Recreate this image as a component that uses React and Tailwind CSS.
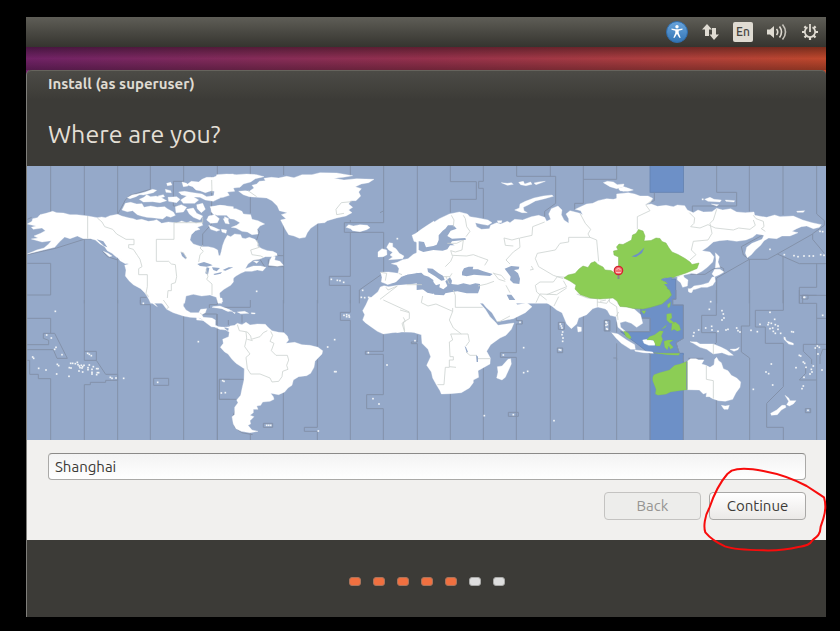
import React from "react";

const SEA = "#95a9c9";
const ZONE = "#6d90c7";
const GREEN = "#8ccd55";

/* Each tile of the map is drawn on a grid three times finer than the map. */
const TILES = {
  northAmerica: "translate(20 160) scale(.33333)",
  atlantic: "translate(220 160) scale(.33333)",
  eurasia: "translate(420 160) scale(.33333)",
  siberia: "translate(620 160) scale(.33333)",
  pacific: "translate(20 300) scale(.33333)",
  southAmerica: "translate(200 300) scale(.33333)",
  africa: "translate(400 290) scale(.33333)",
  oceania: "translate(600 290) scale(.33333)",
};

const ZONE_LINES = [
  ["northAmerica", "M92 18V155M193 18V166M293 18V163M391 18V88L330 106 316 120 293 163M491 18V64H460V138L490 140M575 50V192L548 222V256M592 18V60M193 238V430M293 292V430M22 178L35 172M22 284L110 264 195 237H215M22 310H92V405H22M361 430V412H380M248 274L262 290 293 300"],
  ["atlantic", "M91 18V52M91 105V160M191 18V45M191 195V430M293 190V430M391 18V48M391 180V188M391 217V349H328V376H391V430M491 18V188H373V217H491V338M592 18V216M172 282V287H191M145 298V320H191M105 200L118 215 110 240M418 430V390L482 345M85 300L120 298 134 320 110 330M480 158L490 153"],
  ["eurasia", "M91 18V65H169V118H91V158M190 18V64H176V85H190V175M290 18V49H407V130L374 154V170M391 18V49M490 18V130H464V148M490 58H590V18"],
  ["siberia", "M290 18V97H350V138H217V156M388 18V155M489 18V165M590 18V162L613 182V196L578 221V238L613 280M388 298H443L472 282 578 222M472 282L538 311H618M388 298L290 354V430M388 298V430M489 290V430M590 311V382H538V430M548 430V406H590M103 98V122L70 134M430 224L364 260 370 285 388 298M211 343H255L280 327 300 320 311 326V338"],
  ["pacific", "M22 55H92V100M22 134H86V121L70 115V100H104L142 175H111L100 149H22M22 181H29V223H55V236H92V420M193 0V154H229V181H193V154M229 181L257 223H293V241H257V247H211V254H193V420M293 0V420M361 0V14H391V420M491 40V420M568 24V14H592V0M592 42V420M548 42H590V75M401 235H446V256H401ZM630 238H598V298H630M625 60V75"],
  ["southAmerica", "M52 85V420M151 0V22H70M151 400V420M250 0V98M250 275V420M352 0V140M352 178V382H313V394H352V420M451 0V37H421V61H451V420M550 102V154H496V163H550V284H500V326H550V420M131 238H58V298H110M190 370H218V382H190ZM126 45V68M110 320L98 350 104 382 125 398 158 404"],
  ["africa", "M52 134V156H34V161H52V450M151 311V450M250 232V450M349 68V92H367V102H349V188H301V202H349V450M325 367H355V379H325ZM451 48V450M550 78V450M475 97H493V118H475ZM472 174H488V188H472ZM613 91H630V123H613Z"],
  ["oceania", "M50 95V128M50 160V450M150 192V450M250 45V145L228 158 238 190H150M250 195V214M250 300V450M349 0V76H305V128H349V158L342 165M349 330V450M449 0V108H424V186L449 204V450M550 0V61H466V111H496V160H550V290L500 340V412H550V450M598 0V40H650V270H598L617 250V230M598 16H678M650 85H678M678 163H610V184L635 208V222M678 178H668L660 200V222M650 270V450M606 16H624V27H606ZM616 356H632V368H616ZM13 91H28V122H13ZM40 204H50V212M228 0V28H218V45H250M122 58V84H150V125H62M150 192L160 186M265 205H310"],
];

const LAND = [
  ["northAmerica", "M22 192L36 184 38 176 52 173 60 164 78 160 98 154 110 158 130 159 150 164 170 164 203 168 232 173 245 171 256 173 270 167 293 163 305 168 325 173 340 176 350 180 365 178 385 184 400 182 410 179 425 190 445 186 470 189 485 183 500 188 512 184 528 190 545 186 548 196 532 202 540 208 526 212 514 224 510 240 520 252 545 260 565 260 582 264 593 270 596 286 608 292 640 292V365L612 385 598 396 600 412 606 430H594L589 412 570 405 545 408 520 403 498 408 494 430H392L384 412 374 398 362 386 340 374 327 362 316 348 318 330 314 316 326 312 312 302 290 292 276 280 262 272 254 260 240 252 226 240 212 236 190 236 172 228 150 236 134 231 118 246 104 262 70 270 22 282 50 270 72 264 86 252 94 242 66 246 34 237 54 234 42 228 62 220 76 212 66 204 40 208 34 202 48 198Z"],
  ["northAmerica", "M306 150L316 130 332 127 350 132 366 131 372 142 392 138 412 142 434 140 442 146 460 156 466 166 452 172 440 168 428 177 404 174 380 172 364 168 352 164 338 152 322 155ZM322 113L336 105 366 100 348 110 330 116ZM358 118L372 112 380 104 392 110 408 108 426 114 440 122 420 128 398 125 370 126ZM352 103L376 96 398 88 410 91 400 98 370 105ZM414 108L430 104 434 110 420 114ZM436 88L452 92 454 98 438 97ZM444 112L470 110 480 118 470 128 446 124ZM466 140L484 134 500 142 490 156 468 158ZM482 120L500 108 520 110 536 120 524 130 490 130ZM476 96L494 94 520 98 546 102 560 110 590 106 600 114 580 124 556 120 540 112 510 110 484 104ZM500 74L514 64 536 66 546 58 560 52 580 52 590 48 612 46 640 42V78L620 82 612 90 596 96 574 92 556 98 540 92 528 90 518 80ZM500 148L520 144 530 160 548 168 540 180 520 172 508 162ZM530 134L548 130 556 148 544 158 532 146ZM566 168L584 164 598 176 592 188 572 190 560 180ZM572 142L600 136 640 140V164L612 162 582 164 574 156ZM566 196L582 202 600 210 590 214 572 208ZM614 170L626 176 622 186 612 180ZM440 70L452 67 456 75 442 77ZM486 66L500 70 504 78 490 80Z"],
  ["northAmerica", "M250 274L264 280 276 288 268 290ZM294 293L312 300 326 310 316 311 300 302Z"],
  ["atlantic", "M-20 292L0 288 4 274 8 256 14 240 22 226 32 230 44 222 62 224 66 234 76 236 88 232 105 238 114 250 112 258 126 266 142 272 158 274 170 280 172 286 152 290 136 290 118 298 100 300 84 312 76 326 100 318 122 318 138 322 128 333 112 330 96 334 76 334 62 340 48 348 36 358 40 366 32 376 12 388 -5 402-20 402ZM146 316L150 300 158 286 166 290 164 300 180 304 190 316 172 319ZM100 303L116 304 110 310Z"],
  ["atlantic", "M-10 44L20 42 50 44 80 42 110 44 132 50 106 56 92 66 70 72 60 82 40 84 44 94 22 96 28 106 10 112 -20 116ZM-30 140L0 136 20 138 26 146 48 146 66 154 70 162 92 164 96 178 114 182 134 192 120 198 112 208 114 222 96 224 82 216 66 214 48 204 34 202 50 196 60 188 42 178 30 176 20 166 -10 166ZM10 176L24 180 28 192 16 190ZM4 208L20 210 18 220 6 216Z"],
  ["atlantic", "M56 94L76 92 88 94 102 84 96 76 110 72 118 64 136 62 132 55 154 52 176 54 200 49 222 53 246 44 276 44 300 38 350 39 398 47 370 52 342 55 372 60 410 56 462 58 446 68 424 72 406 80 424 86 416 96 422 108 408 122 392 122 386 132 398 142 386 150 396 158 378 168 350 174 322 182 314 188 294 190 272 205 262 218 256 232 238 235 222 228 206 224 196 208 188 192 182 180 198 176 184 164 202 158 178 152 172 138 156 122 140 114 112 112 88 110 70 104ZM378 202L386 194 400 198 420 194 442 196 450 203 440 209 420 215 398 212 392 206ZM500 262L508 248 518 250 518 260 528 266 538 280 552 288 548 296 528 298 506 299 518 291 510 285 518 277 506 270ZM474 276L486 266 500 270 501 284 490 290 474 291Z"],
  ["atlantic", "M482 337L506 336 534 340 537 326 530 315 514 311 532 307 548 299 564 296 580 283 596 276 600 262 598 254 612 254 614 270 624 275 640 273V430H632L625 348 606 336 586 342 562 344 544 350 534 360 524 370 504 374 494 370 484 366 486 352ZM576 226L588 220 604 208 622 196 642 183V246L622 246 600 250 582 244Z"],
  ["atlantic", "M445 430L456 410 474 395 481 381 492 377 506 380 532 376 570 373 600 369 608 374 604 388 618 400 640 407V430Z"],
  ["eurasia", "M-10 222L10 210 30 194 58 176 88 162 118 156 142 162 150 170 174 174 204 180 216 188 204 196 182 192 166 188 170 200 184 208 208 206 212 196 230 188 242 192 262 184 270 188 284 178 308 180 334 170 356 166 374 172 380 184 392 178 386 162 394 146 414 138 426 150 424 164 432 180 446 190 446 176 438 162 450 152 480 160 488 164 482 152 466 148 482 140 500 132 518 130 534 122 560 116 580 118 604 112 640 107V430H-10Z"],
  ["eurasia", "M284 150L298 144 300 132 316 124 342 114 370 108 396 105 400 109 374 116 346 123 326 134 310 142 312 152 322 158 306 158ZM232 182L246 182 244 188 234 188ZM550 68L562 64 580 66 592 74 612 72 610 80 590 86 570 80ZM596 88L620 84 634 90 610 94ZM244 68L262 70 274 68 280 73 262 76ZM296 67L310 64 314 72 332 66 336 73 318 77 302 74ZM342 69L356 66 376 64 360 70 348 74Z"],
  ["siberia", "M-10 102L25 98 44 102 60 108 84 108 98 115 92 126 74 134 94 132 112 139 138 136 160 140 172 135 194 137 202 150 220 158 234 150 250 156 276 155 290 145 308 150 332 146 350 156 376 158 402 156 404 166 440 172 464 165 480 170 520 168 548 180 576 188 604 194 598 202 580 206 560 198 544 200 530 206 516 214 534 218 510 228 486 228 470 236 446 234 432 242 422 256 406 270 394 284 382 293 376 280 380 262 396 250 426 238 432 226 410 222 398 232 378 240 350 244 322 240 298 242 280 246 262 262 246 272 270 276 282 290 278 306 262 322 246 334 230 342 215 340 170 350 100 340-10 400Z"],
  ["siberia", "M-4 84L12 80 40 90 24 94 0 92ZM254 118L270 112 282 118 304 120 300 126 264 124ZM316 120L344 122 342 126 318 124ZM274 132L296 134 290 138ZM530 154L554 152 550 157 532 157ZM286 278L298 290 294 306 300 322 286 324 288 300ZM284 328L300 328 312 336 298 344 284 350 276 342ZM284 350L286 364 278 376 262 382 244 382 226 388 208 390 222 378 246 374 266 368 276 352ZM205 390L216 388 214 398 206 396ZM172 352L190 344 192 352 204 360 202 378 188 382 182 368 172 360Z"],
  ["pacific", "M382 -10L392 0 402 8 412 20 400 12ZM398 -10L415 0 428 12 440 28 460 38 490 48 510 52 540 54 560 70 574 80 590 82 600 88 616 82 630 86 630 80 612 82 596 80 586 76 586 60 576 54 550 52 545 44 556 38 560 26 542 28 536 38 512 38 498 30 490 18 492 -10ZM578 20L600 18 630 30 626 34 604 24Z"],
  ["southAmerica", "M-10 60L20 62 36 74 50 84 70 82 84 94 90 78 104 76 112 70 126 74 138 67 150 75 172 72 196 73 204 82 216 92 236 97 252 98 262 108 266 120 258 130 284 127 306 134 330 136 354 142 368 152 366 162 352 176 345 184 342 202 332 220 320 227 296 230 280 240 276 256 264 264 254 276 236 284 212 280 220 290 222 298 210 304 188 306 182 316 170 318 174 328 160 328 160 338 150 346 162 350 150 362 152 372 144 376 156 390 174 394 150 398 124 394 108 386 100 372 96 350 104 344 104 322 114 308 110 300 122 286 126 266 132 240 133 206 108 190 96 178 84 162 74 156 61 142 70 130 68 118 86 110 88 96 78 90 60 88 44 80-10 50ZM36 22L58 20 80 26 98 34 82 34 66 26ZM112 36L134 34 146 40 122 41ZM98 36L106 38 104 41ZM154 38L166 39 164 42 154 41ZM56 -6H66L68 6 58 6Z"],
  ["southAmerica", "M640 97L604 96 578 98 550 102 532 94 518 84 496 68 488 60 494 44 488 32 498 14 508 -8H640Z"],
  ["africa", "M-10 128L25 122 44 128 64 134 66 160 84 178 92 200 80 226 94 246 98 264 110 286 120 302 124 312 150 311 184 308 208 294 220 278 220 270 236 262 234 242 270 222 271 204 260 184 272 164 300 144 318 136 334 118 342 99 294 106 286 96 270 80 256 58 240 40 222 20 236 6 210 9 180 6 160 0 100 -10H-10ZM292 230L306 228 324 208 332 206 334 222 316 262 306 270 290 264 294 246ZM532 110L544 112 544 124 534 126Z"],
  ["africa", "M222 -15H640V60L620 60 612 52 596 50 578 56 560 74 536 84 530 102 514 116 500 102 486 68 470 60 458 50 440 38 378 38 350 22 326 10 320 14 340 30 352 44 374 40 378 36 396 50 376 68 340 86 292 95 276 68 258 52 232 18Z"],
  ["oceania", "M-10 22L30 16 60 48 100 55 122 74 128 100 110 112 94 100 76 94 60 98 62 112 76 124 72 126 54 112 48 80 30 76 20 58 -10 50ZM35 128L54 132 80 150 104 164 106 178 92 178 64 160 48 144ZM104 180L128 182 158 186 160 190 130 188 106 184ZM128 150L142 148 168 154 164 166 146 166 132 160ZM270 155L290 156 300 162 340 162 364 172 380 180 400 196 386 196 366 188 340 192 320 178 300 172 280 160Z"],
  ["oceania", "M262 214L272 206 288 206 296 210 312 210 305 222 318 226 330 232 342 224 344 208 350 202 356 212 364 218 370 236 384 242 394 256 410 264 422 276 420 292 408 308 398 328 376 334 356 332 338 326 328 320 318 320 320 308 310 312 298 300 262 299ZM364 346L376 348 388 346 384 358 372 358ZM555 316L566 324 570 332 588 332 580 342 568 348 560 344 566 334ZM556 346L558 352 544 360 532 374 514 376 512 370 530 360 546 346ZM264 -4H280L276 7 268 6ZM390 178L408 177 418 172 414 179 402 184ZM552 140L560 152 580 160 580 165 566 162 552 148Z"],
];

const SEAS = [
  ["northAmerica", "M482 276L490 278 500 294 496 297 486 288ZM532 312L552 306 570 312 578 316 560 320 540 318ZM560 322L568 324 564 344 556 340ZM576 322L600 324 590 334 580 330ZM580 342L606 336 602 341 584 345ZM608 330L626 322 640 322 616 332ZM230 238L250 244 262 262 252 258Z"],
  ["eurasia", "M-4 244L12 246 18 262 40 258 50 254 56 240 56 226 68 212 76 206 84 196 100 196 110 206 92 212 82 228 96 236 136 234 138 239 96 244 92 250 104 256 90 256 82 268 68 272 40 270 10 276 -4 270ZM126 336L132 325 146 320 160 320 158 328 174 328 190 334 218 342 210 348 180 346 162 344 140 349 126 346ZM254 326L274 318 298 320 296 328 282 330 294 340 300 356 298 372 280 370 270 360 272 350ZM22 325L38 326 56 340 70 348 74 360 64 362 44 348 24 336ZM-10 338L6 346 24 358 38 364 48 376 60 372 58 382 70 388 82 378 76 364 90 352 96 362 94 372 114 374 130 370 150 374 166 370 180 372 180 384 174 400 140 400 112 394 96 396 76 400 72 406 44 404 36 396 14 388 -10 390ZM260 404L274 404 286 420H268Z"],
  ["atlantic", "M502 374L530 366 548 350 562 344 588 340 604 338 612 346 626 350 640 360V402L622 398 606 386 610 374 600 368 560 372Z"],
  ["africa", "M194 168L198 172 204 186 200 188ZM228 194L234 200 234 216 230 216Z"],
];

const BORDERS = [
  ["northAmerica", "M203 168V236M232 174L246 186 254 200 278 208 290 222 318 238H342V254H326V264L340 268 352 286 360 298 366 320 356 326V344H382V380L378 400 386 410M548 172V188H462V238H409V304H446L454 312 466 314 470 350 466 368 454 372V392H444L442 414M548 256L540 264 550 274 540 284 536 306M558 328L564 350 560 358 576 372V405M575 60L576 98M482 276L490 278 500 294 496 297"],
  ["atlantic", "M110 240L118 262 92 270 96 284 122 288 130 292M84 92L110 110M395 125L364 128 348 148 350 164 372 160M482 337L500 340 496 362M536 340L546 344M498 382L504 390 532 378M532 378L480 418M560 374L606 374"],
  ["eurasia", "M94 166L102 180 100 200M130 166L136 176 140 200 150 214 138 230M82 250H110L130 240 126 270 106 276 92 272 98 290 92 304 76 320M98 286L140 288 160 284 176 290 204 300 194 316M252 234L276 240 298 234 300 262 280 276 258 300 270 312M252 234L256 256 280 258M300 234L336 226 338 200 374 186M480 160L496 190 512 208 504 222 510 232H446V246L420 250 406 270 352 280 346 296 356 320 400 346 430 356M510 232L530 240 536 304M330 330L340 328 334 318M346 376L360 366 400 366 412 350 440 352M346 376L350 396 380 420M380 404L440 380 430 362M220 340L244 346 256 360M220 338L236 358 256 364M174 378L200 372 222 364M70 350L90 350 96 340M88 372L78 350"],
  ["siberia", "M98 118L78 136 90 152 52 170V208M208 158L224 174 222 190 212 200 240 204 264 194 286 204 340 210 356 204 390 208 406 196 400 180M290 148L280 180 270 190 276 220 264 240 220 244 214 270 228 284 210 300M400 166L408 176 430 184 432 200 424 206 436 214"],
  ["pacific", "M430 0L446 22 440 26M540 38L546 44"],
  ["southAmerica", "M112 74L118 92 142 96 152 108 154 118 180 110 190 98 202 92M138 96L140 114 134 140 150 162 138 172 142 206 152 222M152 222H180L210 234 216 246 236 244 246 230 248 214 264 208 260 196 266 180 262 166H228L214 152 222 130 210 124 218 106 212 94M142 118L158 122M550 0L628 36M610 52L616 64 606 70 614 96"],
  ["africa", "M68 18L64 38 84 48 108 42 158 64M158 64L148 90 160 114 184 132 204 132 208 154 198 168M160 0L166 16V52H248M158 64V54M148 156L158 150 152 132 184 132M148 156L150 200H160V210H148V230L168 232M136 232H148V230M136 232L132 284H112M0 60L28 68V86L10 96 14 122M198 186L210 196 230 196M234 206H270M290 95L300 94 330 78M408 38L420 12 470 14 500 -6M462 48L476 20M530 12L562 24 592 26V50M592 36L620 40 628 28M318 -14L330 8"],
  ["oceania", "M319 226V268L340 272V326M340 162V192M30 18L28 36 50 50 54 90M0 34L18 30M48 80L56 66"],
];

const ISLANDS = [
  ["pacific", [[106, 34], [80, 105], [94, 114], [108, 142], [104, 148], [126, 164], [38, 171], [41, 175], [56, 205], [78, 210], [112, 193], [116, 197], [110, 222], [147, 229], [152, 190], [158, 190], [166, 191], [172, 187], [174, 194], [178, 198], [184, 196], [188, 200], [192, 196], [186, 204], [180, 203], [148, 203], [153, 204], [177, 213], [188, 216], [204, 203], [208, 195], [204, 209], [216, 208], [220, 200], [230, 206], [234, 206], [216, 217], [216, 222], [232, 218], [236, 218], [230, 224], [203, 160], [208, 163], [214, 167], [271, 232], [276, 235], [288, 234], [311, 235], [413, 247], [370, 10], [535, 125]]],
  ["southAmerica", [[68, 242], [72, 244], [64, 279], [76, 278], [404, 119], [383, 141], [404, 215], [408, 215], [505, 158], [561, 195], [519, 296], [537, 312], [432, 46], [440, 50], [447, 46], [440, 44], [448, 51], [200, 376], [206, 376], [212, 376], [355, 393]]],
  ["africa", [[45, 152], [310, 195], [371, 173], [371, 248], [383, 244], [340, 374], [253, 377], [462, 392], [481, 102], [484, 108], [486, 114], [488, 126], [486, 134], [489, 144], [488, 154], [478, 179], [482, 180], [360, 97], [620, 98], [618, 106], [622, 118]]],
  ["oceania", [[328, 58], [366, 62], [370, 72], [372, 84], [366, 90], [317, 114], [335, 109], [336, 120], [354, 124], [378, 120], [384, 118], [410, 114], [414, 122], [420, 126], [296, 120], [282, 128], [280, 138], [453, 121], [472, 125], [480, 103], [510, 67], [524, 88], [506, 98], [504, 104], [514, 100], [526, 104], [534, 108], [518, 114], [510, 116], [520, 124], [534, 118], [526, 130], [542, 130], [575, 125], [580, 126], [554, 144], [668, 76], [598, 196], [602, 198], [588, 233], [610, 216], [614, 220], [618, 232], [640, 228], [634, 238], [636, 246], [630, 252], [612, 262], [652, 168], [658, 172], [646, 174], [654, 192], [666, 240], [606, 296], [610, 288], [460, 298], [518, 285], [498, 246], [506, 251], [624, 361], [612, 22], [18, 96], [22, 104], [20, 116], [514, 222]]],
  ["atlantic", [[110, 394], [334, 358], [352, 361], [360, 362], [371, 367], [428, 391], [424, 412], [434, 413], [446, 412], [532, 236]]],
  ["siberia", [[493, 284], [522, 287], [534, 290], [552, 288], [568, 288], [580, 288], [602, 284], [612, 286], [600, 214], [608, 215], [554, 412], [272, 425], [248, 118], [450, 268]]],
];

function WorldMap() {
  return (
    <svg viewBox="27 166 799 274" className="block h-auto w-full" role="img" aria-label="Time zone map">
      <rect x="27" y="166" width="799" height="274" fill={SEA} />
      <g fill={ZONE} stroke="#6482b0" strokeWidth=".8">
        <rect x="650" y="165" width="33.5" height="27.3" />
        <path d="M668 279H675.7V299.3H672.7V305H683.4V338.3L676 342.7 679.3 353.3H683.4V441H650V354L636 343 620.7 331.7H650V318.3L640.7 318V305Z" />
      </g>
      <g fill="none" stroke="#8492aa" strokeWidth="3">
        {ZONE_LINES.map(([tile, d]) => <path key={d} transform={TILES[tile]} d={d} />)}
      </g>
      <g fill="#fff" stroke="#fff" strokeWidth="1">
        {LAND.map(([tile, d]) => <path key={d} transform={TILES[tile]} d={d} />)}
      </g>
      <g fill={SEA}>
        {SEAS.map(([tile, d]) => <path key={d} transform={TILES[tile]} d={d} />)}
      </g>
      <g fill="none" stroke="#cbd2cf" strokeWidth="2.4">
        {BORDERS.map(([tile, d]) => <path key={d} transform={TILES[tile]} d={d} />)}
      </g>
      <g fill={GREEN} stroke="#7eb757" strokeWidth=".5">
        <path d="M564 278L568 275 575 273.500 579 269 583 266 588 267.500 591 263 595 261.500 598 264.500 603 267 605 270 611 270.500 615 273 618.500 275 618.500 257 614 255 613.500 251 618 250 616.500 247 619 244 623 244.500 631.500 240 632.500 235 636 233.500 638.500 229.500 643 231 645 236 644 241 651 240.500 656 238 660 238.500 662 241.500 666 243 669 248 672 252 678 254.500 685 258.500 690 262 692 264.500 699 263 697 268.500 686 273 677 276 669 279 665 277.500 661 280 665 281 668.500 285 667 288.500 669.500 290 671.500 295 669 298 662 304 650 307.500 643 309 633 308.500 627 307 620 306.500 617 301 613 298 600 299 590 298 580 294.500 575 289 576 285 570 281Z" />
        <g transform={TILES.oceania}>
          <path d="M158 262L162 254 178 248 208 240 224 226 240 222 262 214V299L238 302 212 306 198 313 174 316 166 312 168 298 158 272ZM140 150L148 140 164 134 180 122 190 124 184 138 188 148 180 168 168 168 160 150ZM70 122L84 128 94 142 90 148 78 140ZM124 62L138 62 132 72ZM202 44L212 36 210 50 204 54ZM200 72L214 70 216 84 210 88 224 100 210 100 200 90ZM184 118L200 104 196 112ZM216 100L226 96 238 106 242 120 232 124 222 118 214 122ZM192 154L204 150 220 150 208 158 220 172 212 178 206 168 202 180 194 172ZM162 188L198 190 240 190 236 196 200 194Z" />
        </g>
      </g>
      <path d="M631.500 256.500L638 253.500 644.500 247.500 642 253 636 257ZM661 279L672 277 671 280.500 664 281.500ZM664 284L669 284 670 290Z" fill={ZONE} />
      <path d="M686.700 361.500V389.500" stroke="#8492aa" strokeWidth="1" />
      <g fill="#f4f6f8">
        {ISLANDS.map(([tile, spots]) => (
          <g key={tile} transform={TILES[tile]}>
            {spots.map(([x, y]) => <rect key={`${x}-${y}`} x={x - 2.5} y={y - 2.5} width="5" height="5" />)}
          </g>
        ))}
      </g>
      <path d="M618.500 274V279" stroke="#888" strokeWidth="2" />
      <circle cx="618.500" cy="270.500" r="4.200" fill="#f27474" stroke="#d3222e" strokeWidth="1.200" />
      <path d="M616.500 269.500Q618.500 267.500 620.500 269.500M616 272.500H621" stroke="#ffc1c1" strokeWidth="1" fill="none" />
    </svg>
  );
}

function AccessIcon() {
  return (
    <svg width="22" height="22" viewBox="0 0 22 22" aria-hidden="true">
      <defs>
        <linearGradient id="access" x2="0" y2="1">
          <stop stopColor="#6aa5dc" />
          <stop offset="1" stopColor="#3274b4" />
        </linearGradient>
      </defs>
      <circle cx="11" cy="11" r="10.500" fill="url(#access)" stroke="#2f6cab" />
      <circle cx="11" cy="5.800" r="1.700" fill="#fff" />
      <path d="M5.500 7.500L9.500 8.300H12.500L16.500 7.500V8.700L12.700 9.800V12L14.700 16.800H13.300L11 12.800 8.700 16.800H7.300L9.300 12V9.800L5.500 8.700Z" fill="#fff" />
    </svg>
  );
}

function NetworkIcon() {
  return (
    <svg width="17" height="18" viewBox="0 0 17 18" fill="#dfdbd2" aria-hidden="true">
      <path d="M5 1L10 6.500H7V13H3V6.500H0ZM12 17L7.500 11.500H10V5H14V11.500H17Z" />
    </svg>
  );
}

function SoundIcon() {
  return (
    <svg width="21" height="18" viewBox="0 0 21 18" fill="none" stroke="#dfdbd2" strokeWidth="1.600" aria-hidden="true">
      <path d="M0 6.500H3L7 3V15L3 11.500H0Z" fill="#dfdbd2" stroke="none" />
      <path d="M9.500 6Q12 9 9.500 12M12.500 3.500Q16.500 9 12.500 14.500" />
      <path d="M15.500 1.500Q21.500 9 15.500 16.500" stroke="#c5c2ba" />
    </svg>
  );
}

function SessionIcon() {
  return (
    <svg width="16" height="18" viewBox="0 0 16 18" fill="none" stroke="#dfdbd2" strokeWidth="1.800" aria-hidden="true">
      <path d="M5.500 4.300A5.200 5.200 0 1 0 10.500 4.300M8 1V9" />
      <path d="M4 5L2.400 3.400M12 5L13.600 3.400M3 9H0M13 9H16M4.400 12.600L2.500 14.500M11.600 12.600L13.500 14.500M8 14V17" strokeWidth="2.200" />
    </svg>
  );
}

const STEPS = [true, true, true, true, true, false, false];
const TRAY = "flex items-center";
const BUTTON = "h-7 w-[97px] rounded-[4px] border text-[15px] leading-5";

export default function App() {
  return (
    <div className="min-h-screen bg-black pb-3.5 pl-[26px] pr-3.5 pt-[17px] font-['Ubuntu','Noto_Sans',sans-serif] text-[#3c3b37]">
      <header className="flex h-[30px] items-center justify-end gap-3.5 bg-linear-to-b from-[#5f5e57] to-[#35342f] pr-2">
        <button className={TRAY} aria-label="Accessibility"><AccessIcon /></button>
        <button className={TRAY} aria-label="Network"><NetworkIcon /></button>
        <button className="h-5 w-5 rounded-[2px] bg-[#dfdbd2] text-center text-[12px] font-medium leading-5 text-[#45443f]">En</button>
        <button className={TRAY} aria-label="Sound"><SoundIcon /></button>
        <button className={TRAY} aria-label="Session"><SessionIcon /></button>
      </header>

      <div className="bg-linear-to-r from-[#76246b] via-[#9c3350] to-[#c84b2e]">
        <div className="h-[23px] bg-linear-to-b from-black/40 via-black/5 to-black/30" />
        <main className="rounded-t-[5px] border-l border-[#7f7e7a] bg-[#3c3b37]">
          <div className="rounded-t-[5px] border-t border-[#66645d] bg-linear-to-b from-[#4c4b46] to-[#3c3b37] px-[21px] pb-1.5 pt-[3px] text-[15px] font-bold leading-5 text-[#dfdbd2]">
            Install (as superuser)
          </div>
          <h1 className="px-[21px] pb-4 pt-[18px] text-[25px] leading-8 text-[#e4dfd5]">Where are you?</h1>
          <WorldMap />
          <form className="bg-[#f1f0ee] pb-5 pl-[21px] pr-5 pt-[13px]" onSubmit={(e) => e.preventDefault()}>
            <input
              aria-label="Location"
              defaultValue="Shanghai"
              className="block h-[27px] w-full rounded-[4px] border border-[#aaa9a7] border-t-[#8b8a88] bg-linear-to-b from-[#f3f3f3] to-white px-1.5 text-[15px] leading-5 outline-none"
            />
            <div className="mt-3 flex justify-end gap-2">
              <button type="button" disabled className={`${BUTTON} border-[#c4c3c1] bg-[#ededeb] text-[#969593]`}>Back</button>
              <div className="relative">
                <button type="submit" className={`${BUTTON} border-[#a9a8a6] bg-linear-to-b from-white to-[#ebe9e7]`}>Continue</button>
                <svg className="pointer-events-none absolute -left-1.5 -top-[25px] h-[86px] w-[124px]" viewBox="339 79 372 258" fill="none" aria-hidden="true">
                  <path d="M425 90C445 82 485 84 520 91C580 102 620 120 650 136L685 159 702 170C708 190 706 215 700 234L692 258C691 280 684 286 668 298C660 312 650 315 625 319C580 330 555 330 520 329C470 328 430 326 405 317C385 308 360 292 346 275C340 258 344 226 358 202C370 166 384 132 412 100Z" stroke="#f80c0c" strokeWidth="6" strokeLinejoin="round" />
                </svg>
              </div>
            </div>
          </form>
          <div className="flex justify-center gap-3 pb-[31px] pt-[37px]" aria-label="Step 5 of 7">
            {STEPS.map((done, i) => (
              <span key={i} className={done ? "h-[9px] w-3 rounded-[3px] border border-[#a8745c] bg-[#f07040]" : "h-[9px] w-3 rounded-[3px] border border-[#a9a9a7] bg-[#dedede]"} />
            ))}
          </div>
        </main>
      </div>
    </div>
  );
}
